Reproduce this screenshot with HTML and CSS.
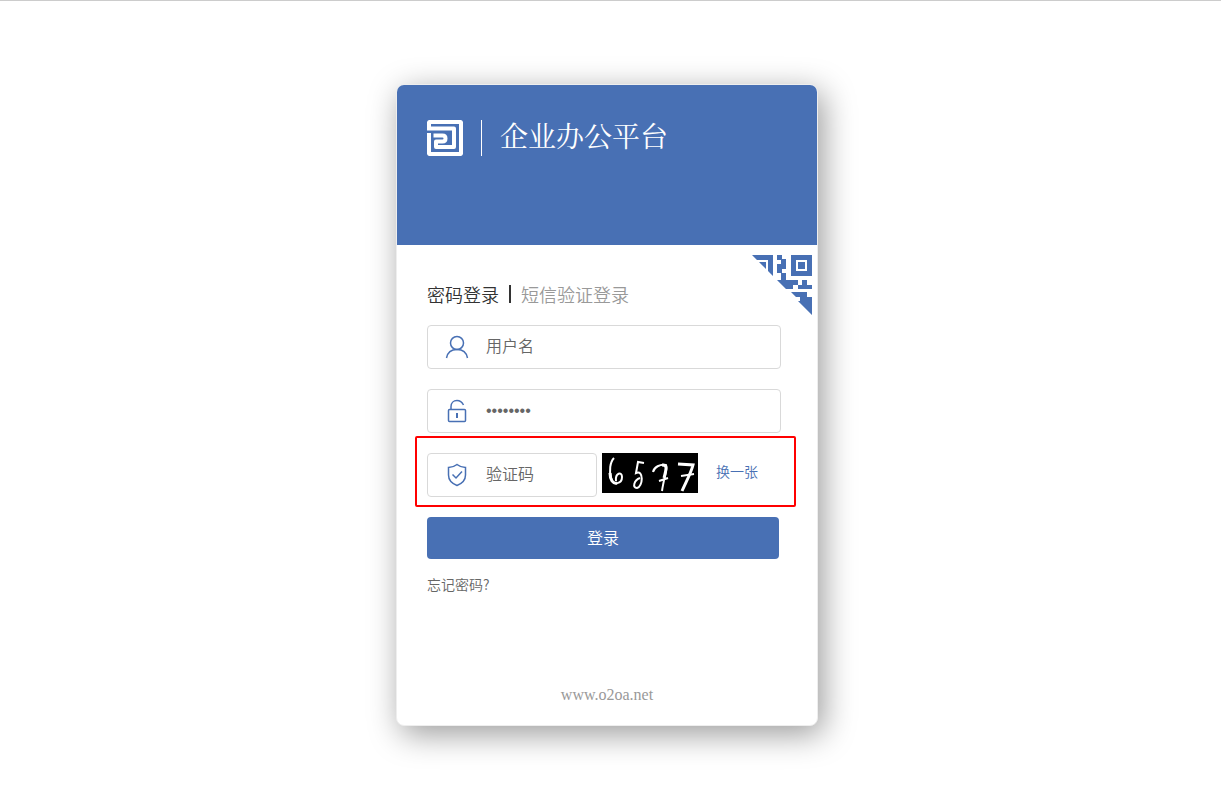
FILE: index.html
```html
<!DOCTYPE html>
<html lang="zh-CN">
<head>
    <meta charset="UTF-8">
    <meta name="viewport" content="width=device-width, initial-scale=1.0">
    <title>企业办公平台</title>
    <link rel="stylesheet" href="styles.css">
</head>
<body>

    <main class="login-card">
        <!-- Brand -->
        <header class="brand">
            <svg class="logo" viewBox="0 0 36 36" aria-hidden="true">
                <path d="M2 8.500V2H34V34H2V13" fill="none" stroke="#fff" stroke-width="4" stroke-linejoin="round"/>
                <path d="M0 8.500H27V27H9V21.500H15.500Q18.500 21.500 18.500 18.500T15.500 15.500H6.500" fill="none" stroke="#fff" stroke-width="4" stroke-linejoin="round"/>
            </svg>
            <h1 class="title">企业办公平台</h1>
        </header>

        <!-- Switch to QR code login -->
        <button class="qr-switch" type="button" aria-label="二维码登录">
            <svg viewBox="0 0 60 60" aria-hidden="true">
                <path fill="#4870b4" fill-rule="evenodd" d="M0 0H21V21L16 16V5H5ZM7 7H14V14ZM39 0H60V21H39ZM44 5V16H55V5ZM46 7H53V14H46Z"/>
                <path fill="#4870b4" d="M25 0H30V4H34V14H30V18H34V25H46V30H50V25H55V30H60V34H46V30H41V34H34L25 25H29V18H25V9H29V5H25ZM39 37H55V42H60V60L46 46H48V42H44Z"/>
            </svg>
        </button>

        <form class="login-form">
            <!-- Login mode -->
            <nav class="tabs">
                <a class="tab active" href="#password">密码登录</a>
                <a class="tab" href="#sms">短信验证登录</a>
            </nav>

            <label class="field">
                <svg class="icon" viewBox="0 0 24 24" aria-hidden="true">
                    <circle cx="12" cy="8" r="6.500"/>
                    <path d="M1.500 23C2.500 17.500 6.500 14.500 12 14.500S21.500 17.500 22.500 23"/>
                </svg>
                <input type="text" placeholder="用户名" aria-label="用户名">
            </label>

            <label class="field">
                <svg class="icon" viewBox="0 0 24 24" aria-hidden="true">
                    <rect x="3.500" y="10.500" width="17" height="12" rx="1"/>
                    <path d="M6 10V7.500C6 4 8.500 1.500 12 1.500C15 1.500 17 3 18.500 6"/>
                    <path d="M12 14V19" stroke-width="2"/>
                </svg>
                <input type="password" value="password" aria-label="密码">
            </label>

            <div class="captcha">
                <label class="field">
                    <svg class="icon" viewBox="0 0 24 24" aria-hidden="true">
                        <path d="M12 1.500C9.500 3.500 6.500 4.500 3.500 4.500V12C3.500 17 7 20.500 12 22.500C17 20.500 20.500 17 20.500 12V4.500C17.500 4.500 14.500 3.500 12 1.500ZM7.500 11.500L11 15L17 8.500"/>
                    </svg>
                    <input type="text" placeholder="验证码" aria-label="验证码">
                </label>
                <svg class="captcha-image" viewBox="0 0 96 40" role="img" aria-label="验证码图片">
                    <path d="M12 5C8 9 7 18 9 25C11 33 20 31 20 24C20 18 13 20 14 28" stroke-width="2"/>
                    <path d="M8 20C8 27 11 31 15 30" stroke-width="3"/>
                    <path d="M42 10L36 9L34 20C42 16 41 34 35 35C30 35 32 27 38 25" stroke-width="2"/>
                    <path d="M51 19C52 14 58 11 64 12C66 15 62 24 60 38M57 28L66 25" stroke-width="2"/>
                    <path d="M60 12C65 12 65 14 62 25" stroke-width="3"/>
                    <path d="M76 11L91 12C89 20 84 29 80 38" stroke-width="3"/>
                    <path d="M79 23L92 21" stroke-width="2"/>
                </svg>
                <button class="refresh" type="button">换一张</button>
            </div>

            <button class="submit" type="submit">登录</button>
            <a class="forgot" href="#forgot">忘记密码?</a>
        </form>

        <footer class="copyright">www.o2oa.net</footer>
    </main>

</body>
</html>
```

FILE: styles.css
```css
* {
    box-sizing: border-box;
}

body {
    margin: 0;
    padding: 83px 7px 80px 0;
    border-top: 1px solid #ccc;
    background-color: #fff;
    font-family: "Liberation Sans", "Noto Sans CJK SC", sans-serif;
    font-size: 16px;
    font-weight: 350;
}

button,
input {
    font-family: inherit;
    font-weight: inherit;
}

button {
    padding: 0;
    border: none;
    background: none;
    cursor: pointer;
}

a {
    text-decoration: none;
}

.login-card {
    position: relative;
    width: 100%;
    max-width: 422px;
    margin: 0 auto;
    border: 1px solid #eee;
    border-radius: 8px;
    background-color: #fff;
    box-shadow: 5px 8px 32px rgba(0, 0, 0, 0.4);
}

.brand {
    display: flex;
    align-items: flex-start;
    height: 160px;
    padding: 35px 30px;
    border-radius: 7px 7px 0 0;
    background-color: #4870b4;
}

.logo {
    width: 36px;
    height: 36px;
    border-radius: 2px;
}

.title {
    height: 36px;
    margin: 0 0 0 18px;
    padding-left: 18px;
    border-left: 1px solid #fff;
    color: #fff;
    font-family: "Noto Serif CJK SC", "Noto Sans CJK SC", serif;
    font-size: 28px;
    font-weight: 400;
    line-height: 30px;
}

.qr-switch {
    position: absolute;
    top: 170px;
    right: 5px;
    width: 60px;
    height: 60px;
}

.qr-switch svg {
    display: block;
}

.login-form {
    display: flex;
    flex-direction: column;
    gap: 20px;
    padding: 40px 36px 0 30px;
}

.tabs {
    display: flex;
    align-items: flex-start;
    height: 20px;
    font-size: 18px;
    line-height: 22px;
}

.tab {
    color: #999;
}

.tab.active {
    margin-right: 10px;
    padding-right: 12px;
    background: linear-gradient(#333, #333) right top / 2px 18px no-repeat;
    color: #333;
}

.field {
    display: flex;
    align-items: center;
    height: 44px;
    padding: 0 17px;
    border: 1px solid #d9d9d9;
    border-radius: 4px;
}

.icon {
    flex: none;
    width: 24px;
    height: 24px;
    margin-right: 17px;
    fill: none;
    stroke: #4870b4;
    stroke-width: 1.5;
}

.field input {
    flex: 1;
    min-width: 0;
    height: 40px;
    padding: 0;
    border: none;
    outline: none;
    background: none;
    color: #666;
    font-size: 16px;
}

.field input::placeholder {
    color: #666;
}

.captcha {
    position: relative;
    display: flex;
    align-items: flex-start;
}

/* Highlight frame around the captcha row */
.captcha::after {
    content: "";
    position: absolute;
    inset: -17px -15px -10px -12px;
    border: 2px solid #f00;
    border-radius: 2px;
    pointer-events: none;
}

.captcha .field {
    width: 170px;
}

.captcha-image {
    width: 96px;
    height: 40px;
    margin: 0 18px 0 5px;
    background-color: #000;
    fill: none;
    stroke: #fff;
}

.refresh {
    height: 36px;
    color: #4870b4;
    font-size: 14px;
}

.submit {
    height: 42px;
    margin-right: 2px;
    padding-bottom: 2px;
    border-radius: 4px;
    background-color: #4870b4;
    color: #fff;
    font-size: 16px;
}

.forgot {
    align-self: flex-start;
    margin-top: -5px;
    color: #666;
    font-family: "Noto Sans CJK SC", sans-serif;
    font-size: 14px;
    line-height: 20px;
}

.copyright {
    padding: 91px 0 20px;
    color: #999;
    font-family: "Liberation Serif", serif;
    line-height: 20px;
    text-align: center;
}
```
